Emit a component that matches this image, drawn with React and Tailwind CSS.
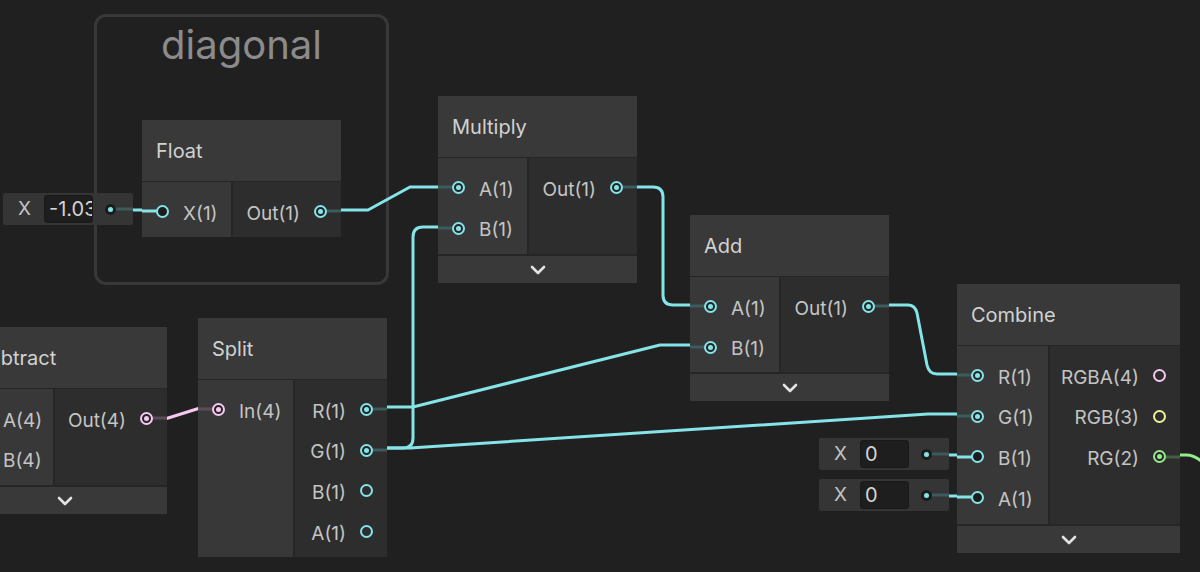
import React from 'react'

const ring = {
  cyan: 'border-[#84e4e7]',
  pink: 'border-[#f7c8f0]',
  yellow: 'border-[#eef39b]',
  green: 'border-[#96ea8e]',
}

const fill = {
  cyan: 'bg-[#84e4e7]',
  pink: 'bg-[#f7c8f0]',
  yellow: 'bg-[#eef39b]',
  green: 'bg-[#96ea8e]',
}

const stubDim = {
  cyan: 'bg-[#3b5b5c]',
  pink: 'bg-[#5d4a5a]',
  yellow: 'bg-[#5a5c3e]',
  green: 'bg-[#465f43]',
}

// linked: ring with a centre dot, inline: ring over a dark fill, open: bare ring
function Port({ color = 'cyan', state = 'open' }) {
  const inner =
    state === 'inline' ? 'bg-[#1c1c1c]' : state === 'linked' ? 'bg-[#252525]' : 'bg-transparent'
  return (
    <span
      className={`relative z-10 flex h-[13px] w-[13px] shrink-0 items-center justify-center rounded-full border-2 ${ring[color]} ${inner}`}
    >
      {state === 'linked' && <span className={`h-[5px] w-[5px] rounded-full ${fill[color]}`} />}
    </span>
  )
}

function InRow({ label, color = 'cyan', state = 'open', stub }) {
  const stubColor = stub === 'bright' ? fill[color] : stubDim[color]
  return (
    <div className="relative flex h-[40.7px] items-center gap-[14px] pl-[14px]">
      {stub && (
        <span className={`absolute left-0 top-1/2 h-[3px] w-[18px] -translate-y-1/2 ${stubColor}`} />
      )}
      <Port color={color} state={state} />
      <span className="pt-[5px]">{label}</span>
    </div>
  )
}

function OutRow({ label, color = 'cyan', state = 'open', stub }) {
  return (
    <div className="relative flex h-[40.7px] items-center justify-end gap-[14px] pr-[14px]">
      {stub && (
        <span className={`absolute right-0 top-1/2 h-[3px] w-[18px] -translate-y-1/2 ${stubDim[color]}`} />
      )}
      <span className="pt-[5px]">{label}</span>
      <Port color={color} state={state} />
    </div>
  )
}

function Chevron() {
  return (
    <svg width="16" height="10" viewBox="0 0 16 10">
      <polyline
        points="2,2 8,8 14,2"
        fill="none"
        stroke="#e2e2e2"
        strokeWidth="2.6"
        strokeLinecap="round"
        strokeLinejoin="round"
      />
    </svg>
  )
}

function Node({ place, title, inW, bodyH, inputs = [], outputs = [], footer = true }) {
  return (
    <div className={`absolute ${place} flex flex-col bg-[#262626] text-[19px] text-[#c4c4c4]`}>
      <div className="flex h-[61px] items-center bg-[#393939] px-[14px] text-[20px] text-[#d2d2d2]">
        {title}
      </div>
      <div className={`mt-px flex ${bodyH}`}>
        <div className={`${inW} shrink-0 bg-[#383838] pt-[9px]`}>
          {inputs.map((p) => (
            <InRow key={p.label} {...p} />
          ))}
        </div>
        <div className="ml-[2px] flex-1 bg-[#2d2d2d] pt-[9px]">
          {outputs.map((p) => (
            <OutRow key={p.label} {...p} />
          ))}
        </div>
      </div>
      {footer && (
        <div className="mt-[2px] flex h-[27px] items-center justify-center bg-[#393939]">
          <Chevron />
        </div>
      )}
    </div>
  )
}

// default value box hanging off an unconnected input
function InlineField({ place, value }) {
  return (
    <div
      className={`absolute ${place} flex h-[32px] w-[130px] items-center rounded-[2px] bg-[#353535] pl-[15px] text-[19px] text-[#c4c4c4]`}
    >
      <span>X</span>
      <div className="ml-[13px] h-[28px] w-[49px] overflow-hidden whitespace-nowrap rounded-[3px] border border-[#191919] bg-[#1e1e1e] pl-[4px] text-[20px] leading-[26px] text-[#d4d4d4]">
        {value}
      </div>
      <div className="relative ml-auto flex h-full w-[25px] items-center">
        <span className="absolute right-0 top-1/2 h-[3px] w-[20px] -translate-y-1/2 bg-[#3b5b5c]" />
        <span className="relative z-10 -ml-[3px] flex h-[11px] w-[11px] items-center justify-center rounded-full bg-[#1c1c1c]">
          <span className="h-[5px] w-[5px] rounded-full bg-[#84e4e7]" />
        </span>
      </div>
    </div>
  )
}

function Wires() {
  const cyan = '#84e4e7'
  return (
    <svg className="absolute inset-0" width="1200" height="572" fill="none" strokeWidth="3" strokeLinejoin="round">
      <path d="M341 210 L368 210 L410 187 L440 187" stroke={cyan} />
      <path d="M637 187 L653 187 Q663 187 663 197 L663 295 Q663 305 673 305 L692 305" stroke={cyan} />
      <path d="M386 407 L413 407 L660 345 L692 345" stroke={cyan} />
      <path d="M386 448 L403 448 Q413 448 413 438 L413 237 Q413 227 423 227 L440 227" stroke={cyan} />
      <path d="M386 448 L410 448 L928 414 L959 414" stroke={cyan} />
      <path d="M889 305 L908 305 Q915 305 917 313 L927 365 Q929 374 937 374 L959 374" stroke={cyan} />
      <path d="M165 419 L200 408" stroke="#f7c8f0" />
      <path d="M1178 455 L1186 455 Q1196 455 1204 464" stroke="#96ea8e" />
      <path d="M132 210 L144 210" stroke={cyan} />
      <path d="M947 455 L959 455" stroke={cyan} />
      <path d="M947 496 L959 496" stroke={cyan} />
    </svg>
  )
}

export default function App() {
  return (
    <div className="relative h-[572px] w-[1200px] overflow-hidden bg-[#202020] font-[Inter,sans-serif]">
      <div className="absolute left-[94px] top-[14px] flex h-[271px] w-[295px] justify-center rounded-[12px] border-[3px] border-[#383838] pt-[4px]">
        <span className="text-[40px] leading-[48px] text-[#8b8b8b]">diagonal</span>
      </div>

      <Wires />

      <InlineField place="left-[3px] top-[193px]" value="-1.03" />
      <InlineField place="left-[819px] top-[438px]" value="0" />
      <InlineField place="left-[819px] top-[479px]" value="0" />

      <Node
        place="left-[142px] top-[120px] w-[199px]"
        title="Float"
        inW="w-[89px]"
        bodyH="h-[55px]"
        footer={false}
        inputs={[{ label: 'X(1)', state: 'inline', stub: 'bright' }]}
        outputs={[{ label: 'Out(1)', state: 'linked', stub: true }]}
      />

      <Node
        place="left-[438px] top-[96px] w-[199px]"
        title="Multiply"
        inW="w-[89px]"
        bodyH="h-[96px]"
        inputs={[
          { label: 'A(1)', state: 'linked', stub: 'dim' },
          { label: 'B(1)', state: 'linked', stub: 'dim' },
        ]}
        outputs={[{ label: 'Out(1)', state: 'linked', stub: true }]}
      />

      <Node
        place="left-[690px] top-[215px] w-[199px]"
        title="Add"
        inW="w-[89px]"
        bodyH="h-[95px]"
        inputs={[
          { label: 'A(1)', state: 'linked', stub: 'dim' },
          { label: 'B(1)', state: 'linked', stub: 'dim' },
        ]}
        outputs={[{ label: 'Out(1)', state: 'linked', stub: true }]}
      />

      <Node
        place="left-[-38px] top-[327px] w-[205px]"
        title="Subtract"
        inW="w-[91px]"
        bodyH="h-[96px]"
        inputs={[{ label: 'A(4)', color: 'pink' }, { label: 'B(4)', color: 'pink' }]}
        outputs={[{ label: 'Out(4)', color: 'pink', state: 'linked', stub: true }]}
      />

      <Node
        place="left-[198px] top-[318px] w-[189px]"
        title="Split"
        inW="w-[95px]"
        bodyH="h-[177px]"
        footer={false}
        inputs={[{ label: 'In(4)', color: 'pink', state: 'linked', stub: 'dim' }]}
        outputs={[
          { label: 'R(1)', state: 'linked', stub: true },
          { label: 'G(1)', state: 'linked', stub: true },
          { label: 'B(1)' },
          { label: 'A(1)' },
        ]}
      />

      <Node
        place="left-[957px] top-[284px] w-[223px]"
        title="Combine"
        inW="w-[91px]"
        bodyH="h-[178px]"
        inputs={[
          { label: 'R(1)', state: 'linked', stub: 'dim' },
          { label: 'G(1)', state: 'linked', stub: 'dim' },
          { label: 'B(1)', state: 'inline', stub: 'bright' },
          { label: 'A(1)', state: 'inline', stub: 'bright' },
        ]}
        outputs={[
          { label: 'RGBA(4)', color: 'pink' },
          { label: 'RGB(3)', color: 'yellow' },
          { label: 'RG(2)', color: 'green', state: 'linked', stub: true },
        ]}
      />
    </div>
  )
}
